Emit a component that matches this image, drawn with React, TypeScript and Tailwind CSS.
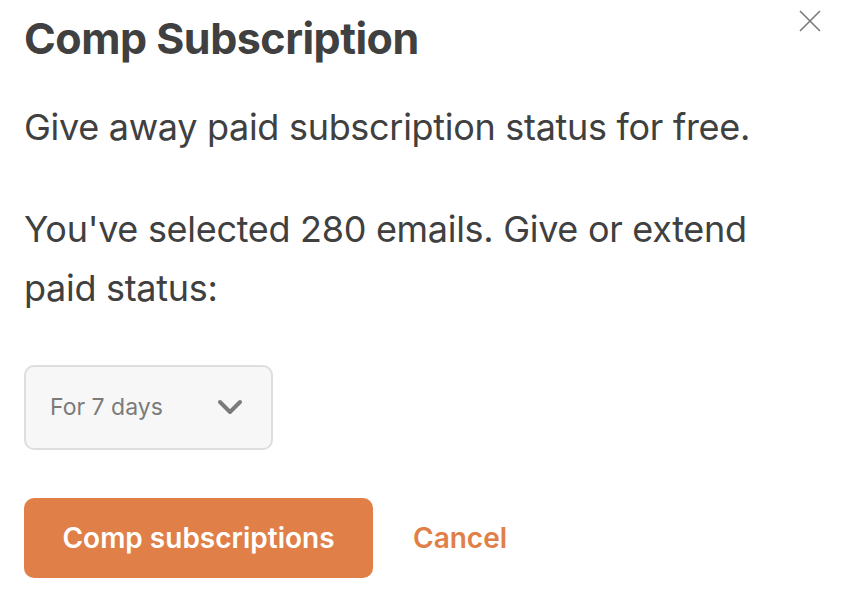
import React from 'react';

const App = () => {
    return (
        <div className="relative w-[842px] h-[598px] bg-white text-[#404040]" style={{ fontFamily: 'Inter, "Liberation Sans", sans-serif' }}>
            {/* close button */}
            <button className="absolute right-[20px] top-[9px] w-[24px] h-[24px] text-[#7a7a7a]">
                <svg viewBox="0 0 24 24" width="24" height="24" fill="none" stroke="currentColor" strokeWidth="1.6">
                    <path d="M2 2L22 22M22 2L2 22" />
                </svg>
            </button>

            <div className="px-[24px] pt-[12px]">
                <h2 className="text-[43px] leading-[52px] font-bold tracking-[-0.5px]">Comp Subscription</h2>

                <p className="mt-[34px] text-[36px] leading-[59px] tracking-[-0.3px]">Give away paid subscription status for free.</p>

                <p className="mt-[43px] w-[760px] text-[36px] leading-[59px] tracking-[-0.3px]">
                    You've selected 280 emails. Give or extend paid status:
                </p>

                <div className="mt-[47px] w-[249px] h-[85px] rounded-[10px] border-2 border-[#dedede] bg-[#f7f7f7] flex items-center justify-between pl-[24px] pr-[28px]">
                    <span className="text-[23px] text-[#7b7b7b]">For 7 days</span>
                    <svg viewBox="0 0 26 17" width="26" height="17" fill="none" stroke="#7b7b7b" strokeWidth="4" strokeLinecap="round" strokeLinejoin="round">
                        <path d="M3 3L13 13L23 3" />
                    </svg>
                </div>

                <div className="mt-[48px] flex items-center gap-[40px]">
                    <button className="w-[349px] h-[80px] rounded-[10px] bg-[#e07f48] text-white text-[28px] font-semibold">
                        Comp subscriptions
                    </button>
                    <button className="text-[28px] font-semibold text-[#e07f48]">Cancel</button>
                </div>
            </div>
        </div>
    );
};

export default App;
